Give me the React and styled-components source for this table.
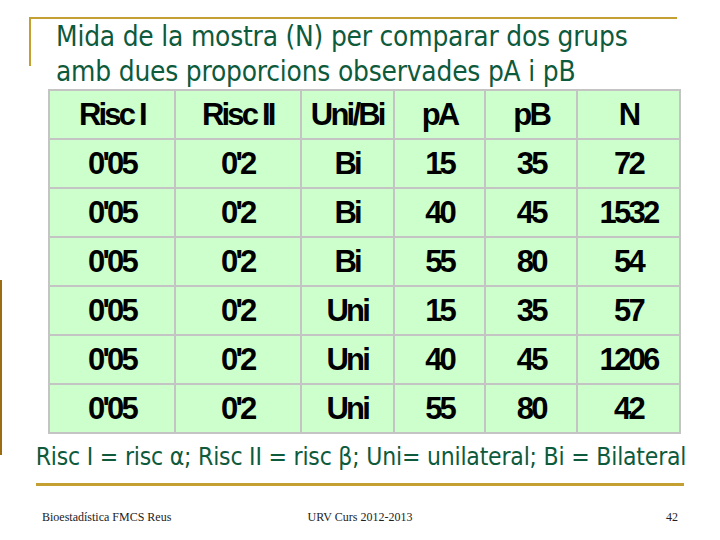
import React from "react";
import styled, { createGlobalStyle } from "styled-components";

const GlobalStyle = createGlobalStyle`
  html, body {
    margin: 0;
    padding: 0;
    background: #ffffff;
  }
`;

const gold = "#c4a032";
const darkGreen = "#0d5a3c";

const Page = styled.div`
  width: 720px;
  height: 540px;
  display: flex;
  overflow: hidden;
  background: #ffffff;
`;

const Rail = styled.div`
  flex: none;
  width: 2px;
  height: 175px;
  margin-top: 280px;
  background: #9c6c12;
`;

const Main = styled.div`
  flex: 1;
  display: flex;
  flex-direction: column;
  padding-top: 17px;
`;

const TitleFrame = styled.div`
  height: 47px;
  width: 646px;
  margin-left: 27px;
  border-top: 2px solid ${gold};
  border-left: 2px solid ${gold};
`;

const Title = styled.h1`
  margin: 0;
  padding: 0 0 0 25px;
  font-family: "DejaVu Sans Condensed", "Liberation Sans Narrow", sans-serif;
  font-weight: normal;
  font-size: 27.8px;
  line-height: 35px;
  letter-spacing: -0.2px;
  color: ${darkGreen};
  white-space: nowrap;
`;

const Table = styled.table`
  margin: 23px 0 0 46px;
  width: 633px;
  border-collapse: collapse;
  background: #ccffcc;
  border: 2px solid #c4c4c4;
`;

const Cell = styled.td`
  height: 47px;
  width: ${(p) => p.w}px;
  padding: 0;
  border: 2px solid #c4c4c4;
  text-align: center;
  vertical-align: middle;
  font-family: "Liberation Sans Narrow", "Liberation Sans", sans-serif;
  font-weight: bold;
  font-size: 31px;
  letter-spacing: -2.8px;
  color: #000000;
`;

const Caption = styled.p`
  margin: 8px 0 0 0;
  text-align: center;
  font-family: "DejaVu Sans Condensed", "Liberation Sans Narrow", sans-serif;
  font-size: 24.5px;
  line-height: 30px;
  letter-spacing: -0.2px;
  color: ${darkGreen};
  white-space: nowrap;
`;

const Rule = styled.div`
  margin: 11px 0 0 34px;
  width: 648px;
  height: 3px;
  background: ${gold};
`;

const Footer = styled.div`
  display: grid;
  grid-template-columns: 1fr 1fr 1fr;
  align-items: center;
  margin-top: 24px;
  padding: 0 42px 0 40px;
  font-family: "Liberation Serif", serif;
  font-size: 12px;
  color: #222222;
`;

const FootItem = styled.span`
  text-align: ${(p) => p.align || "left"};
`;

const widths = [127, 127, 92, 92, 92, 103];

const rows = [
  ["Risc I", "Risc II", "Uni/Bi", "pA", "pB", "N"],
  ["0'05", "0'2", "Bi", "15", "35", "72"],
  ["0'05", "0'2", "Bi", "40", "45", "1532"],
  ["0'05", "0'2", "Bi", "55", "80", "54"],
  ["0'05", "0'2", "Uni", "15", "35", "57"],
  ["0'05", "0'2", "Uni", "40", "45", "1206"],
  ["0'05", "0'2", "Uni", "55", "80", "42"],
];

const App = () => {
  return (
    <Page>
      <GlobalStyle />
      <Rail />
      <Main>
        <TitleFrame>
          <Title>
            Mida de la mostra (N) per comparar dos grups
            <br />
            amb dues proporcions observades pA i pB
          </Title>
        </TitleFrame>

        <Table>
          <tbody>
            {rows.map((row, i) => (
              <tr key={i}>
                {row.map((v, j) => (
                  <Cell key={j} w={widths[j]}>
                    {v}
                  </Cell>
                ))}
              </tr>
            ))}
          </tbody>
        </Table>

        <Caption>
          Risc I = risc α; Risc II = risc β; Uni= unilateral; Bi = Bilateral
        </Caption>
        <Rule />

        <Footer>
          <FootItem>Bioestadística FMCS Reus</FootItem>
          <FootItem align="center">URV Curs 2012-2013</FootItem>
          <FootItem align="right">42</FootItem>
        </Footer>
      </Main>
    </Page>
  );
};

export default App;
